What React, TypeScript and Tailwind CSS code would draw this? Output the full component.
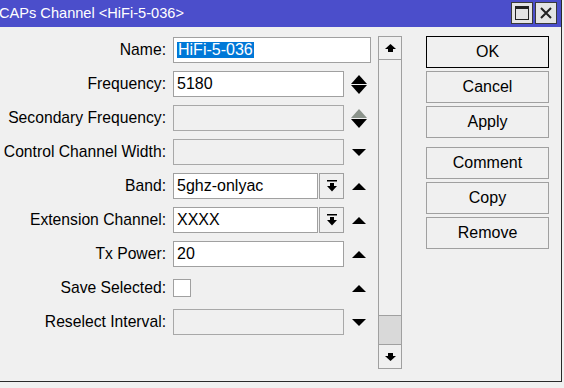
import React from "react";

const font = "font-['Liberation_Sans','Arial',sans-serif]";

function TriUp({ w = 14, h = 7, color = "#000" }: { w?: number; h?: number; color?: string }) {
  return (
    <svg width={w} height={h} viewBox={`0 0 ${w} ${h}`} className="block">
      <polygon points={`${w / 2},0 ${w},${h} 0,${h}`} fill={color} />
    </svg>
  );
}

function TriDown({ w = 14, h = 7, color = "#000" }: { w?: number; h?: number; color?: string }) {
  return (
    <svg width={w} height={h} viewBox={`0 0 ${w} ${h}`} className="block">
      <polygon points={`0,0 ${w},0 ${w / 2},${h}`} fill={color} />
    </svg>
  );
}

function DropIcon() {
  return (
    <svg width="10" height="12" viewBox="0 0 10 12" className="block">
      <rect x="0" y="0" width="10" height="1.5" fill="#000" />
      <rect x="3" y="3" width="4" height="3" fill="#000" />
      <polygon points="0,6 10,6 5,11.5" fill="#000" />
    </svg>
  );
}

function ScrollArrow({ up }: { up?: boolean }) {
  return (
    <svg width="11" height="8" viewBox="0 0 11 8" className="block" style={{ transform: up ? undefined : "rotate(180deg)" }}>
      <polygon points="5.5,0 11,5 0,5" fill="#000" />
      <rect x="3" y="5" width="5" height="3" fill="#000" />
    </svg>
  );
}

function Label({ text }: { text: string }) {
  return <div className="w-[166px] shrink-0 text-right text-[15.7px] text-black whitespace-nowrap leading-none">{text}</div>;
}

function Field({ value, disabled, width = 171, children }: { value?: string; disabled?: boolean; width?: number; children?: React.ReactNode }) {
  return (
    <div
      className={`h-[26px] shrink-0 border flex items-center pl-[3px] text-[16px] text-black ${
        disabled ? "bg-[#f0f0f0] border-[#a8a8a8]" : "bg-white border-[#a0a0a0]"
      }`}
      style={{ width }}
    >
      {children ?? value}
    </div>
  );
}

function Arrows({ children }: { children?: React.ReactNode }) {
  return <div className="ml-[7px] w-[16px] flex flex-col items-center justify-center gap-[1px]">{children}</div>;
}

function Row({ label, children }: { label: string; children: React.ReactNode }) {
  return (
    <div className="flex items-center h-[26px]">
      <Label text={label} />
      <div className="ml-[7px] flex items-center">{children}</div>
    </div>
  );
}

function Combo({ value }: { value: string }) {
  return (
    <div className="flex items-center gap-[1px]">
      <Field value={value} width={145} />
      <div className="w-[25px] h-[26px] border border-[#a0a0a0] bg-[#f0f0f0] flex items-center justify-center">
        <DropIcon />
      </div>
    </div>
  );
}

function Btn({ label, primary }: { label: string; primary?: boolean }) {
  return (
    <div
      className={`h-[32px] w-[123px] flex items-center justify-center text-[16px] text-black bg-[#f0f0f0] border ${
        primary ? "border-black" : "border-[#a0a0a0]"
      }`}
    >
      {label}
    </div>
  );
}

export default function App() {
  return (
    <div className={`w-[564px] h-[388px] bg-[#f0f0f0] overflow-hidden ${font}`}>
      <div className="w-[562px] h-[382px] border-r border-b border-[#2a2a2a] flex flex-col">
        {/* TITLE BAR */}
        <div className="h-[27px] shrink-0 bg-[#4b4ecb] flex items-center justify-between">
          <div className="text-white text-[14.6px] -ml-[1px] leading-none whitespace-nowrap">CAPs Channel &lt;HiFi-5-036&gt;</div>
          <div className="flex items-center gap-[2px] mr-[4px] mt-[-2px]">
            <div className="w-[22px] h-[22px] bg-[#e4e4e4] border border-[#3a3a3a] flex items-center justify-center">
              <svg width="14" height="14" viewBox="0 0 14 14">
                <rect x="0.5" y="0.5" width="13" height="13" fill="none" stroke="#222" strokeWidth="1" />
                <rect x="0" y="0" width="14" height="3" fill="#222" />
              </svg>
            </div>
            <div className="w-[22px] h-[22px] bg-[#e4e4e4] border border-[#3a3a3a] flex items-center justify-center">
              <svg width="12" height="12" viewBox="0 0 12 12">
                <path d="M1 1 L11 11 M11 1 L1 11" stroke="#222" strokeWidth="2" />
              </svg>
            </div>
          </div>
        </div>

        {/* BODY */}
        <div className="flex-1 flex">
          {/* FORM */}
          <div className="w-[378px] shrink-0 pt-[10px] flex flex-col gap-[8px]">
            <Row label="Name:">
              <Field width={198}>
                <span className="bg-[#0078d7] text-white px-[1px] leading-[16px]">HiFi-5-036</span>
              </Field>
            </Row>
            <Row label="Frequency:">
              <Field value="5180" />
              <Arrows>
                <TriUp w={16} h={9} />
                <TriDown w={16} h={9} />
              </Arrows>
            </Row>
            <Row label="Secondary Frequency:">
              <Field disabled />
              <Arrows>
                <TriUp w={16} h={9} color="#8c948c" />
                <TriDown w={16} h={9} />
              </Arrows>
            </Row>
            <Row label="Control Channel Width:">
              <Field disabled />
              <Arrows>
                <TriDown />
              </Arrows>
            </Row>
            <Row label="Band:">
              <Combo value="5ghz-onlyac" />
              <Arrows>
                <TriUp />
              </Arrows>
            </Row>
            <Row label="Extension Channel:">
              <Combo value="XXXX" />
              <Arrows>
                <TriUp />
              </Arrows>
            </Row>
            <Row label="Tx Power:">
              <Field value="20" />
              <Arrows>
                <TriUp />
              </Arrows>
            </Row>
            <Row label="Save Selected:">
              <div className="w-[171px] flex items-center">
                <div className="w-[18px] h-[18px] bg-white border border-[#a0a0a0]" />
              </div>
              <Arrows>
                <TriUp />
              </Arrows>
            </Row>
            <Row label="Reselect Interval:">
              <Field disabled />
              <Arrows>
                <TriDown />
              </Arrows>
            </Row>
          </div>

          {/* SCROLLBAR */}
          <div className="w-[24px] shrink-0 mt-[9px] h-[333px] border border-[#a0a0a0] flex flex-col bg-[#f0f0f0]">
            <div className="h-[23px] border-b border-[#a0a0a0] flex items-center justify-center">
              <ScrollArrow up />
            </div>
            <div className="flex-1" />
            <div className="h-[29px] bg-[#d9d9d9] border-t border-[#a0a0a0]" />
            <div className="h-[24px] border-t border-[#a0a0a0] flex items-center justify-center">
              <ScrollArrow />
            </div>
          </div>

          {/* BUTTONS */}
          <div className="ml-[24px] pt-[9px] flex flex-col gap-[3px]">
            <Btn label="OK" primary />
            <Btn label="Cancel" />
            <Btn label="Apply" />
            <div className="h-[3px]" />
            <Btn label="Comment" />
            <Btn label="Copy" />
            <Btn label="Remove" />
          </div>
        </div>
      </div>
    </div>
  );
}
